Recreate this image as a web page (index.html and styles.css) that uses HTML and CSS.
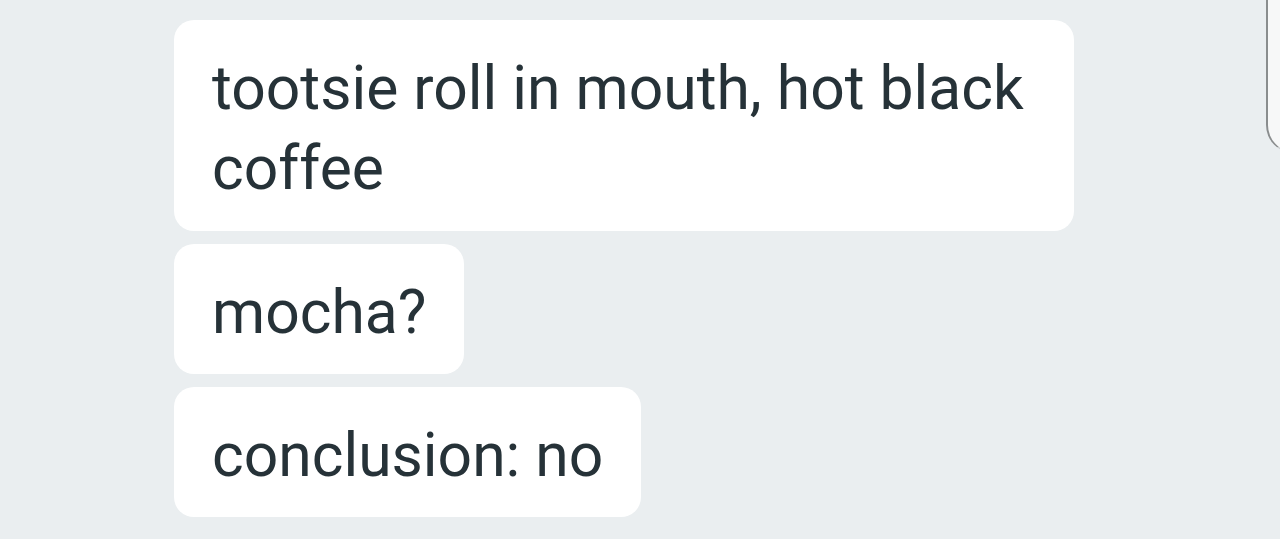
FILE: index.html
```html
<!DOCTYPE html>
<html lang="en">
<head>
    <meta charset="UTF-8">
    <meta name="viewport" content="width=device-width, initial-scale=1.0">
    <title>Chat</title>
    <link rel="stylesheet" href="styles.css">
</head>
<body>
    <div class="edge-panel"></div>
    <div class="thread">
        <div class="bubble wide">tootsie roll in mouth, hot black coffee</div>
        <div class="bubble">mocha?</div>
        <div class="bubble">conclusion: no</div>
    </div>
</body>
</html>
```

FILE: styles.css
```css
body {
    margin: 0;
    background-color: #eaeef0;
    font-family: Roboto, "Liberation Sans", sans-serif;
    overflow: hidden;
    height: 539px;
    position: relative;
}
.thread {
    display: flex;
    flex-direction: column;
    align-items: flex-start;
    gap: 13px;
    padding: 20px 0 0 174px;
}
.bubble {
    background-color: #ffffff;
    color: #263238;
    font-size: 60.6px;
    line-height: 80px;
    padding: 29px 38px 21px;
    border-radius: 20px;
    max-width: 824px;
}
.wide {
    width: 824px;
    padding-bottom: 22px;
}
.edge-panel {
    position: absolute;
    left: 1266px;
    top: -30px;
    width: 60px;
    height: 182px;
    background-color: #f7f8f8;
    border-left: 2px solid #8a8d8e;
    border-bottom-left-radius: 28px;
    border-bottom: 1px solid #c8cbcc;
}
```
